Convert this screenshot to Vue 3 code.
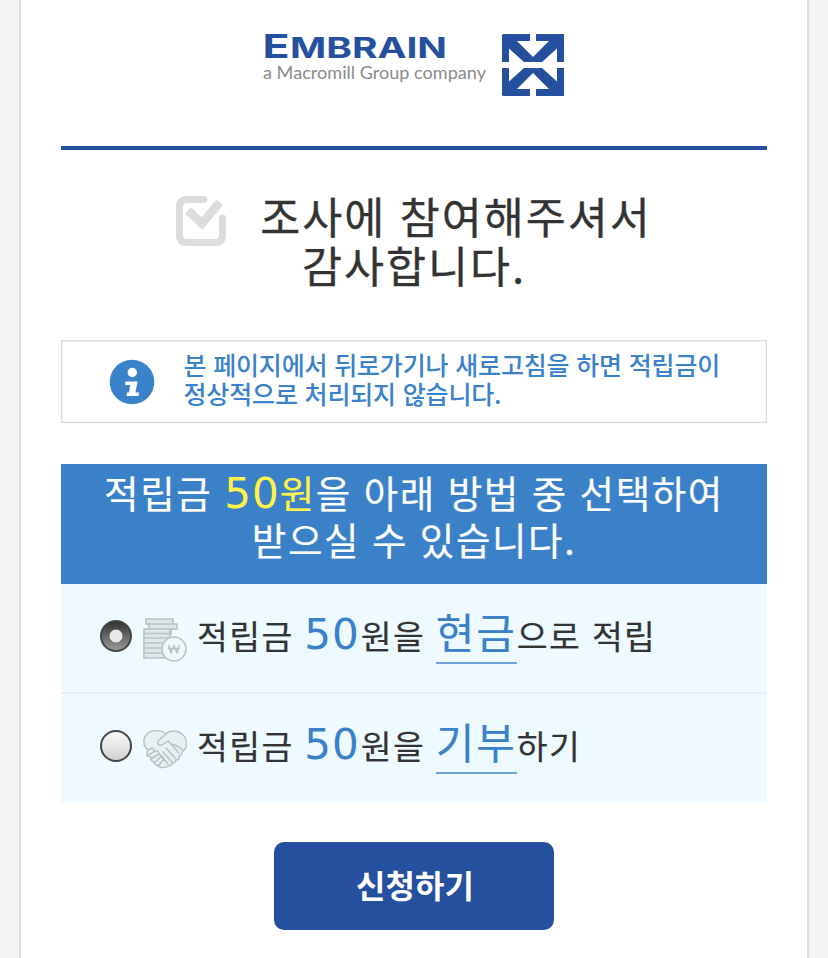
<template>
  <div class="page">
    <header class="header">
      <svg class="logo" width="300" height="62" viewBox="0 0 300 62" role="img">
        <text class="logo-name" x="-1.5" y="24" font-size="33" textLength="27" lengthAdjust="spacingAndGlyphs">E</text>
        <text class="logo-name" x="26" y="24" font-size="28.500" textLength="157" lengthAdjust="spacingAndGlyphs">MBRAIN</text>
        <text class="logo-tag" x="-1" y="45" font-size="16.5" textLength="223" lengthAdjust="spacingAndGlyphs">a Macromill Group company</text>
        <g transform="translate(238 0)" fill="#25509d" fill-rule="evenodd">
          <path :d="markHalf" />
          <path :d="markHalf" transform="translate(0 62) scale(1 -1)" />
        </g>
      </svg>
    </header>

    <h1 class="title">
      <svg class="check" width="50" height="50" viewBox="0 0 50 50" fill="none" stroke="#dadddc">
        <path d="M28 3.5H11Q3.5 3.5 3.5 11V39Q3.5 46.500 11 46.500H39Q46.500 46.500 46.500 39V22" stroke-width="7" stroke-linecap="round" />
        <path d="M15 17.500L26 27.500L41 9.500" stroke-width="8.500" stroke-linecap="square" />
      </svg>조사에 참여해주셔서<br>감사합니다.
    </h1>

    <div class="notice">
      <svg class="info" width="46" height="46" viewBox="0 0 46 46">
        <circle cx="23" cy="23" r="22.300" fill="#3a82c9" />
        <circle cx="23.300" cy="13.500" r="4.700" fill="#fff" />
        <path d="M16.500 22.500H28.500L26.500 33.500H30L29.500 37H17.500L18 33.500H20L21.200 26H16Z" fill="#fff" />
      </svg>
      <p>본 페이지에서 뒤로가기나 새로고침을 하면 적립금이<br>정상적으로 처리되지 않습니다.</p>
    </div>

    <section class="reward">
      <h2>적립금 <em><b>50</b>원</em>을 아래 방법 중 선택하여<br>받으실 수 있습니다.</h2>
      <label
        v-for="option in options"
        :key="option.value"
        class="option"
        :class="{ checked: selected === option.value }"
      >
        <input v-model="selected" type="radio" name="reward" :value="option.value">
        <svg v-if="option.value === 'cash'" class="icon" width="44" height="44" viewBox="0 0 44 44" fill="none" stroke="#b9c2c3" stroke-width="1.600">
          <path d="M3 1H30V6H34V11H28V16H3V11H6V6H3Z" fill="#dfe7e8" />
          <path d="M4 6H31M5 11H31" />
          <path d="M1 11H27V40H1Z" fill="#dfe7e8" />
          <path d="M1 15.500H27M1 20H25M1 25H20M1 30H19M1 35H20" />
          <circle cx="31" cy="31" r="12" fill="#edf8fa" />
          <path d="M25.500 27L28 34.500L31 28L34 34.500L36.500 27M25 30.500H37" stroke-width="1.700" />
        </svg>
        <svg v-else class="icon" width="44" height="40" viewBox="0 0 44 40" fill="none" stroke="#b9c2c3" stroke-width="1.500" stroke-linejoin="round" stroke-linecap="round">
          <path d="M23 4C17-1 9 0 5 3C-1 8 0 16 5 20L4 22Q3 26 8 27Q7 31 11 32Q12 36 15 35Q18 39 21 37Q24 38 25 36Q29 36 29 33Q33 33 33 30Q37 30 36 26Q39 26 39 22C45 18 45 9 39 4C34 0 26 0 23 4Z" fill="#e7f0f2" />
          <path d="M23 4L15 11Q14 16 19 15L25 11L28 14L36 23M23 18L33 29M20 22L29 32M17 25L25 34M5 20L9 18L12 21L4 26M12 21L15 21L16 24L8 29M16 24L19 26L11 33M19 26L21 29L15 36M28 14Q34 15 40 20" />
        </svg>
        <span class="option-text">적립금 <b>50</b>원을 <strong>{{ option.action }}</strong>{{ option.rest }}</span>
      </label>
    </section>

    <button class="submit" type="button">신청하기</button>
  </div>
</template>

<script setup>
import { ref } from 'vue'

const options = [
  { value: 'cash', action: '현금', rest: '으로 적립' },
  { value: 'donate', action: '기부', rest: '하기' }
]

const selected = ref('cash')

// upper half of the logo mark, mirrored for the lower one
const markHalf = 'M1 0H28V7H15L31 23L47 7H34V0H62V28H55V14.500L40 28H22L7 14.500V28H0V1Z'
</script>

<style>
body {
  margin: 0;
  background: #f4f4f4;
}
</style>

<style scoped>
.page {
  box-sizing: border-box;
  height: 958px;
  margin: 0 19px;
  padding: 0 40px;
  border: solid #dcdcdc;
  border-width: 0 2px;
  background: #fff;
  font-family: "Noto Sans CJK KR", sans-serif;
  color: #333;
  display: flex;
  flex-direction: column;
  overflow: hidden;
}

.header {
  box-sizing: border-box;
  height: 150px;
  padding-top: 34px;
  border-bottom: 4px solid #25509d;
  text-align: center;
  flex: none;
}

.logo {
  display: block;
  margin: 0 auto;
  overflow: visible;
}

.logo-name {
  font-family: Inter, sans-serif;
  font-weight: 700;
  fill: #25509d;
}

.logo-tag {
  font-family: Lato, sans-serif;
  fill: #8b8b8b;
}

.title {
  height: 190px;
  margin: 0;
  padding-top: 41px;
  box-sizing: border-box;
  flex: none;
  font-size: 43.5px;
  font-weight: 400;
  line-height: 49px;
  letter-spacing: 2px;
  word-spacing: 1.7px;
  text-align: center;
  white-space: nowrap;
  -webkit-text-stroke: 0.3px;
}

.check {
  margin: 5px 34px -55px 0;
  vertical-align: top;
}

.notice {
  box-sizing: border-box;
  height: 83px;
  padding: 0 0 0 46.5px;
  display: flex;
  align-items: center;
  gap: 29px;
  border: 1px solid #dadada;
  box-shadow: inset 0 0 0 1px #f3f3f3;
  flex: none;
}

.notice p {
  margin: 0 0 5px;
  font-size: 25px;
  font-weight: 500;
  line-height: 29px;
  letter-spacing: -0.15px;
  word-spacing: 1.3px;
  color: #3a82c9;
  white-space: nowrap;
}

.reward {
  margin-top: 41px;
  flex: none;
}

.reward h2 {
  box-sizing: border-box;
  height: 120px;
  margin: 0;
  padding-top: 4px;
  background: #3a81c8;
  color: #fff;
  font-size: 37.5px;
  font-weight: 400;
  line-height: 47px;
  letter-spacing: 1.6px;
  word-spacing: 1.8px;
  text-align: center;
  white-space: nowrap;
  -webkit-text-stroke: 0.2px;
}

.reward em {
  color: #fff04a;
  font-style: normal;
}

.reward b {
  font-family: "DejaVu Sans", sans-serif;
  font-size: 42px;
  font-weight: 400;
  line-height: 1;
  letter-spacing: 1px;
  -webkit-text-stroke: 0;
}

.option {
  box-sizing: border-box;
  height: 108px;
  padding-left: 39px;
  display: flex;
  align-items: center;
  background: #eefaff;
}

.option + .option {
  height: 110px;
  border-top: 2px solid #ebeced;
}

.option input {
  appearance: none;
  box-sizing: border-box;
  width: 32px;
  height: 32px;
  margin: 0 11px 4px 0;
  border: 2px solid #444;
  border-radius: 50%;
  background: linear-gradient(#fafafa, #d2d2d2);
}

.option.checked input {
  background: radial-gradient(circle, #e9e9e9 0 6px, transparent 6.8px), linear-gradient(#333, #999);
}

.icon {
  margin: 4px 10px 0 0;
}

.option-text {
  margin-bottom: 7px;
  font-size: 33.5px;
  line-height: 60px;
  letter-spacing: 1.4px;
  word-spacing: 1.7px;
  white-space: nowrap;
  -webkit-text-stroke: 0.2px;
}

.option b {
  margin-right: 1px;
  color: #3a81c8;
}

.option strong {
  display: inline-block;
  box-sizing: border-box;
  height: 58px;
  margin-bottom: -3px;
  line-height: 50px;
  border-bottom: 2px solid #6fa3dc;
  color: #3a81c8;
  font-size: 42px;
  font-weight: 400;
  letter-spacing: 1.9px;
}

.submit {
  width: 280px;
  height: 88px;
  margin: 40px auto 0;
  padding: 0 0 4px 2px;
  border: 0;
  border-radius: 10px;
  background: #25509d;
  color: #fff;
  font: 700 32px/1 "Noto Sans CJK KR", sans-serif;
  flex: none;
}
</style>
